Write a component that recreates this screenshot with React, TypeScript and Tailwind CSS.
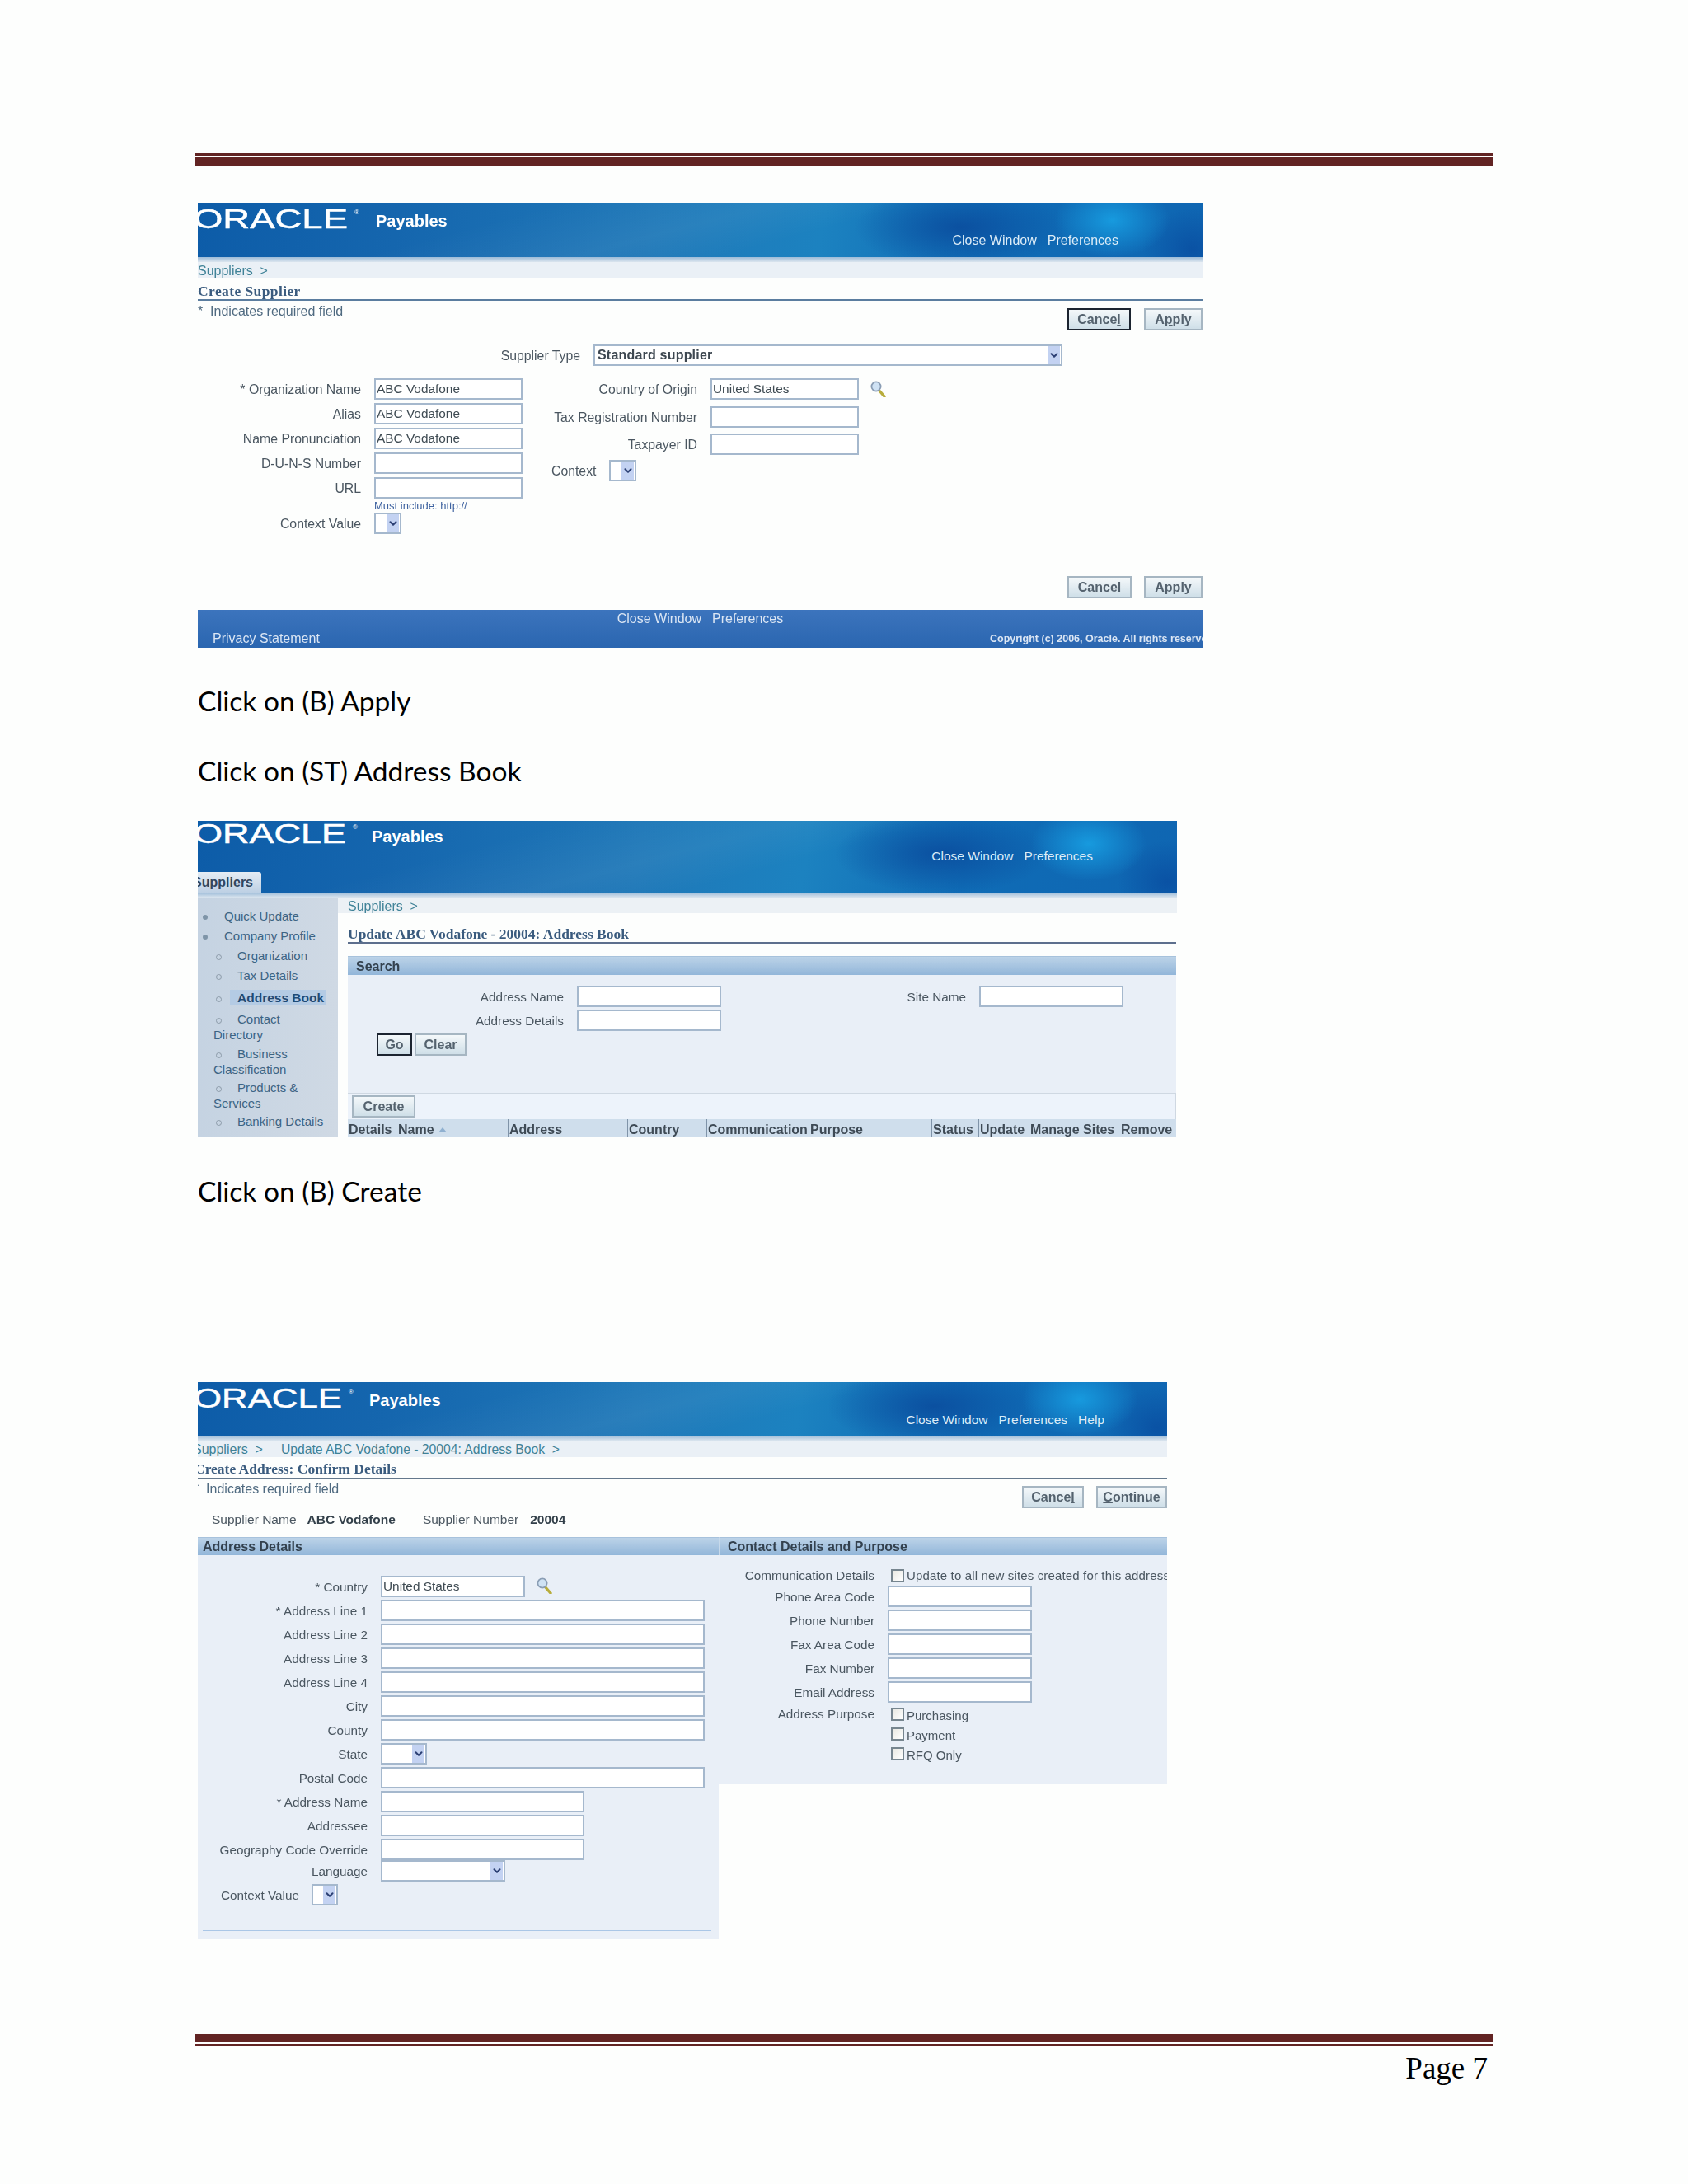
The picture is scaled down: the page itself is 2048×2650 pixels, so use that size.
import React from "react";
import { ChevronDown } from "lucide-react";

const headerBg =
  "bg-[radial-gradient(ellipse_70px_45px_at_91%_32%,#179ade_0%,rgba(23,154,222,0)_100%),radial-gradient(ellipse_130px_50px_at_76%_45%,#0b50a0_0%,rgba(11,80,160,0)_100%),radial-gradient(ellipse_60px_50px_at_99%_85%,#0a52a4_0%,rgba(10,82,164,0)_100%),linear-gradient(165deg,rgba(255,255,255,0)_30%,rgba(255,255,255,0.05)_48%,rgba(255,255,255,0)_60%),linear-gradient(100deg,#0d5ca8_0%,#1566ae_20%,#1f78b8_45%,#1c82c0_62%,#0f6cb6_78%,#0f66b2_100%)]";

function Logo({ w }: { w: number }) {
  return (
    <svg width={w} height={30} className="block shrink-0">
      <text x={-5} y={27} fontSize={33} textLength={w - 12} lengthAdjust="spacingAndGlyphs" fill="#ffffff" stroke="#ffffff" strokeWidth={0.5} fontFamily="Liberation Sans, sans-serif">ORACLE</text>
      <text x={w - 9} y={10} fontSize={8} fill="#ffffff" fontFamily="Liberation Sans, sans-serif">®</text>
    </svg>
  );
}

function Header({ h, logo, logoTop, gap, payTop, linksBottom, linksRight, linkSize, links, tab }: { h: string; logo: number; logoTop: string; gap: string; payTop: string; linksBottom: string; linksRight: string; linkSize: string; links: string[]; tab?: boolean }) {
  return (
    <div className={`flex justify-between relative ${h} ${headerBg}`}>
      <div className="flex flex-col justify-between">
        <div className={`flex ${logoTop}`}>
          <Logo w={logo} />
          <span className={`${gap} ${payTop} text-[20px] font-bold text-white leading-[20px]`}>Payables</span>
        </div>
        {tab && (
          <div className="w-[77px] h-[25px] bg-gradient-to-b from-[#e6edf4] to-[#bdd0e4] rounded-tr-[3px] overflow-hidden flex justify-end items-center pr-[10px] text-[16px] font-bold text-[#31465e] whitespace-nowrap">
            Suppliers
          </div>
        )}
      </div>
      <div className={`self-end flex gap-[13px] ${linkSize} text-[#dcecf7] leading-[20px] ${linksBottom} ${linksRight}`}>
        {links.map((l) => (
          <span key={l}>{l}</span>
        ))}
      </div>
    </div>
  );
}

function Band() {
  return <div className="h-[6px] shrink-0 bg-gradient-to-b from-[#9cbbd8] to-[#dbe5ee]" />;
}

function Input({ w, value }: { w: string; value?: string }) {
  return <div className={`${w} h-[26px] shrink-0 border-2 border-[#a5b8cd] bg-white text-[15.4px] text-[#3e4a52] leading-[22px] px-[1px] whitespace-nowrap`}>{value}</div>;
}

function Select({ w, value }: { w: string; value?: string }) {
  return (
    <div className={`${w} h-[26px] shrink-0 border-2 border-[#a5b8cd] bg-white flex justify-between items-stretch`}>
      <span className="pl-[3px] text-[16px] tracking-[0.2px] font-bold text-[#3d4750] leading-[22px]">{value}</span>
      <span className="w-[15px] bg-[#c3d2f2] flex items-center justify-center mr-[1px]">
        <ChevronDown size={14} strokeWidth={3.5} className="text-[#2c4074]" />
      </span>
    </div>
  );
}

function Btn({ w, dark, children }: { w: string; dark?: boolean; children: React.ReactNode }) {
  return (
    <div className={`${w} h-[27px] shrink-0 flex items-center justify-center border-2 ${dark ? "border-[#1c2430]" : "border-[#a6b6c2]"} bg-gradient-to-b from-[#f4f8fa] to-[#cfdfe8] text-[16px] font-bold text-[#54626e] leading-none`}>
      {children}
    </div>
  );
}

function Loupe() {
  return (
    <svg width="20" height="20" viewBox="0 0 20 20" className="shrink-0">
      <line x1="10" y1="11" x2="17" y2="19" stroke="#b8ad3c" strokeWidth="3.4" strokeLinecap="round" />
      <circle cx="7" cy="7" r="5.6" fill="#cfe2f4" stroke="#8a9db4" strokeWidth="1.8" />
    </svg>
  );
}

function Check({ label, wide }: { label: string; wide?: boolean }) {
  return (
    <div className="flex items-center h-[16px]">
      <span className="size-[16px] shrink-0 border-2 border-[#76858f] bg-gradient-to-br from-[#e8e8e2] to-white" />
      <span className={`ml-[3px] text-[15px] leading-[20px] text-[#4a5660] whitespace-nowrap ${wide ? "tracking-[0.15px]" : "mt-[3px]"}`}>{label}</span>
    </div>
  );
}

const label = "shrink-0 h-[26px] leading-[28px] text-[#4a5660] text-right whitespace-nowrap";
const leftLabel = "shrink-0 h-[26px] leading-[28px] text-[#4a5660] text-left whitespace-nowrap";
const crumb = "text-[16px] text-[#3f8297] leading-[22px]";
const title = "font-['Liberation_Serif',serif] font-bold text-[17.5px] text-[#3a5b7e] leading-[20px]";
const note = "text-[16px] text-[#4f6a80] leading-[20px] whitespace-nowrap";
const section = "bg-gradient-to-b from-[#bcd3e8] to-[#92b6d9] border-t border-[#a7c2dc] text-[16px] font-bold text-[#33414e]";
const click = "font-['Lato',sans-serif] text-[33.5px] leading-[44px] text-black ml-[240px] whitespace-nowrap";

function Rule({ flip }: { flip?: boolean }) {
  return (
    <div className="ml-[236px] w-[1576px]">
      {flip ? (
        <>
          <div className="h-[10px] bg-[#622423]" />
          <div className="h-[3px] mt-[2px] bg-[#622423]" />
        </>
      ) : (
        <>
          <div className="h-[3px] bg-[#622423]" />
          <div className="h-[11px] mt-[2px] bg-[#622423]" />
        </>
      )}
    </div>
  );
}

function Row({ name, w, children }: { name: string; w: string; children: React.ReactNode }) {
  return (
    <div className="flex items-start gap-[16px]">
      <div className={`${w} ${label}`}>{name}</div>
      {children}
    </div>
  );
}

function ScreenOne() {
  return (
    <div className="ml-[240px] mt-[44px] w-[1219px] h-[540px] overflow-hidden flex flex-col blur-[0.4px] text-[15.8px]">
      <Header h="h-[66px] shrink-0" logo={199} logoTop="pt-[4px]" gap="ml-[17px]" payTop="mt-[8px]" linksBottom="pb-[10px]" linksRight="pr-[102px]" linkSize="text-[16px]" links={["Close Window", "Preferences"]} />
      <Band />
      <div className={`h-[19px] shrink-0 bg-[#eaf0f6] ${crumb}`}>Suppliers&nbsp;&nbsp;&gt;</div>
      <div className="h-[28px] shrink-0 border-b-2 border-[#5b7d9f] flex items-end">
        <span className={`${title} tracking-[0.4px]`}>Create Supplier</span>
      </div>
      <div className="flex justify-between h-[36px] shrink-0">
        <span className={`${note} mt-[3px]`}>*&nbsp;&nbsp;Indicates required field</span>
        <div className="flex gap-[16px] mt-[9px]">
          <Btn w="w-[77px]" dark>Cance<u>l</u></Btn>
          <Btn w="w-[71px]">A<u>p</u>ply</Btn>
        </div>
      </div>
      <div className="mt-[17px] shrink-0">
        <Row name="Supplier Type" w="w-[464px]">
          <Select w="w-[569px]" value="Standard supplier" />
        </Row>
      </div>
      <div className="flex mt-[15px] shrink-0">
        <div className="flex flex-col">
          <div className="flex flex-col gap-[4px]">
            <Row name="* Organization Name" w="w-[198px]"><Input w="w-[180px]" value="ABC Vodafone" /></Row>
            <Row name="Alias" w="w-[198px]"><Input w="w-[180px]" value="ABC Vodafone" /></Row>
            <Row name="Name Pronunciation" w="w-[198px]"><Input w="w-[180px]" value="ABC Vodafone" /></Row>
            <Row name="D-U-N-S Number" w="w-[198px]"><Input w="w-[180px]" /></Row>
            <Row name="URL" w="w-[198px]"><Input w="w-[180px]" /></Row>
          </div>
          <div className="ml-[214px] h-[17px] text-[13px] leading-[17px] text-[#3f63a0]">Must include: http://</div>
          <Row name="Context Value" w="w-[198px]"><Select w="w-[33px]" /></Row>
        </div>
        <div className="ml-[16px] flex flex-col gap-[7.5px]">
          <div className="flex items-start gap-[16px]">
            <div className={`w-[196px] ${label}`}>Country of Origin</div>
            <Input w="w-[180px]" value="United States" />
            <div className="-ml-[2px] mt-[3px]"><Loupe /></div>
          </div>
          <Row name="Tax Registration Number" w="w-[196px]"><Input w="w-[180px]" /></Row>
          <Row name="Taxpayer ID" w="w-[196px]"><Input w="w-[180px]" /></Row>
          <div className="flex ml-[19px] -mt-[2px]">
            <div className={`w-[70px] ${leftLabel}`}>Context</div>
            <Select w="w-[33px]" />
          </div>
        </div>
      </div>
      <div className="flex justify-end gap-[15px] mt-[51px] h-[28px] shrink-0">
        <Btn w="w-[78px]">Cance<u>l</u></Btn>
        <Btn w="w-[71px]">A<u>p</u>ply</Btn>
      </div>
      <div className="mt-[13px] h-[46px] shrink-0 bg-gradient-to-b from-[#3c74bd] to-[#2a66b0] flex flex-col justify-between text-[#dbe6f4]">
        <div className="flex justify-center gap-[13px] text-[16px] leading-[20px] pt-[1px]">
          <span>Close Window</span>
          <span>Preferences</span>
        </div>
        <div className="flex justify-between items-center pl-[18px] pb-[1px] text-[16px] leading-[20px]">
          <span>Privacy Statement</span>
          <span className="w-[258px] overflow-hidden whitespace-nowrap text-[12.5px] font-bold">Copyright (c) 2006, Oracle. All rights reserved.</span>
        </div>
      </div>
    </div>
  );
}

const sideItem = "text-[15px] leading-[18.5px] text-[#3c6484]";

function Dot() {
  return (
    <span className="inline-block w-[32px]">
      <span className="inline-block size-[6px] rounded-full bg-[#7f95a8] align-middle ml-[6px]" />
    </span>
  );
}

function Ring() {
  return (
    <span className="inline-block w-[29px]">
      <span className="inline-block size-[7px] rounded-full border border-[#8b9aa8] align-middle ml-[3px]" />
    </span>
  );
}

function Sidebar() {
  return (
    <div className="w-[170px] h-[291px] shrink-0 overflow-hidden bg-gradient-to-r from-[#c5d3e2] to-[#cfd9e4] pt-[14px] flex flex-col">
      <div className={`${sideItem} h-[24px] shrink-0`}><Dot />Quick Update</div>
      <div className={`${sideItem} h-[24px] shrink-0`}><Dot />Company Profile</div>
      <div className={`${sideItem} h-[24px] shrink-0 pl-[19px]`}><Ring />Organization</div>
      <div className={`${sideItem} h-[24px] shrink-0 pl-[19px]`}><Ring />Tax Details</div>
      <div className="flex h-[29px] shrink-0 pl-[19px] items-start pt-[2px]">
        <Ring />
        <span className="-ml-[9px] w-[117px] h-[19px] bg-[#b4cbe4] pl-[9px] text-[15.5px] font-bold leading-[19px] text-[#1f4a75] whitespace-nowrap">Address Book</span>
      </div>
      <div className={`${sideItem} h-[42px] shrink-0 pl-[19px]`}><Ring />Contact<br />Directory</div>
      <div className={`${sideItem} h-[41px] shrink-0 pl-[19px]`}><Ring />Business<br />Classification</div>
      <div className={`${sideItem} h-[41px] shrink-0 pl-[19px]`}><Ring />Products &amp;<br />Services</div>
      <div className={`${sideItem} h-[24px] shrink-0 pl-[19px] whitespace-nowrap`}><Ring />Banking Details</div>
    </div>
  );
}

function ScreenTwo() {
  const cols: [string, string][] = [
    ["w-[60px]", "Details"],
    ["w-[134px]", "Name"],
    ["w-[145px]", "Address"],
    ["w-[96px]", "Country"],
    ["w-[125px]", "Communication"],
    ["w-[148px]", "Purpose"],
    ["w-[57px]", "Status"],
    ["w-[62px]", "Update"],
    ["w-[110px]", "Manage Sites"],
    ["w-[68px]", "Remove"],
  ];
  return (
    <div className="ml-[240px] mt-[39px] w-[1188px] h-[384px] overflow-hidden flex flex-col blur-[0.4px] text-[15.3px]">
      <Header h="h-[87px] shrink-0" tab logo={197} logoTop="pt-[0px]" gap="ml-[14px]" payTop="mt-[9px]" linksBottom="pb-[34px]" linksRight="pr-[102px]" linkSize="text-[15.5px]" links={["Close Window", "Preferences"]} />
      <Band />
      <div className="flex flex-1 min-h-0">
        <Sidebar />
        <div className="flex-1 flex flex-col min-w-0">
          <div className={`h-[19px] shrink-0 bg-[#ecf1f5] pl-[12px] ${crumb}`}>Suppliers&nbsp;&nbsp;&gt;</div>
          <div className="ml-[12px] mr-[1px] h-[37px] shrink-0 flex flex-col justify-end border-b-2 border-[#5d6f8d]">
            <span className={title}>Update ABC Vodafone - 20004: Address Book</span>
          </div>
          <div className={`ml-[12px] mr-[1px] mt-[15px] h-[23px] shrink-0 pl-[10px] leading-[24px] ${section}`}>Search</div>
          <div className="ml-[12px] mr-[1px] h-[143px] shrink-0 bg-[#e9eff7] pt-[13px]">
            <div className="flex">
              <div className="flex flex-col gap-[3px]">
                <Row name="Address Name" w="w-[262px]"><Input w="w-[175px]" /></Row>
                <Row name="Address Details" w="w-[262px]"><Input w="w-[175px]" /></Row>
              </div>
              <div className="ml-[9px]">
                <Row name="Site Name" w="w-[288px]"><Input w="w-[175px]" /></Row>
              </div>
            </div>
            <div className="flex gap-[3px] ml-[35px] mt-[3px]">
              <Btn w="w-[43px]" dark>Go</Btn>
              <Btn w="w-[63px]">Clear</Btn>
            </div>
          </div>
          <div className="ml-[12px] mr-[1px] h-[32px] shrink-0 bg-[#edf3fb] border-t border-r border-[#cfd8e2] pt-[2px] pl-[5px]">
            <Btn w="w-[77px]">Create</Btn>
          </div>
          <div className="ml-[12px] mr-[1px] h-[22px] shrink-0 bg-[#cfdeec] flex text-[16px] font-bold text-[#3e4a55] leading-[20px] whitespace-nowrap">
            {cols.map(([w, t], i) => (
              <div key={t} className={`${w} shrink-0 pl-[1px] pt-[3px] flex items-start gap-[5px] ${i === 2 || i === 3 || i === 4 || i === 6 || i === 7 ? "border-l border-[#7f93a8]" : ""}`}>
                {t}
                {t === "Name" && <span className="size-0 mt-[7px] border-x-[5px] border-x-transparent border-b-[6px] border-b-[#8fb0d0]" />}
              </div>
            ))}
          </div>
        </div>
      </div>
    </div>
  );
}

function ScreenThree() {
  const lw = "w-[206px]";
  return (
    <div className="ml-[240px] mt-[210px] w-[1176px] h-[676px] overflow-hidden flex flex-col blur-[0.4px] text-[15.3px]">
      <Header h="h-[65px] shrink-0" logo={192} logoTop="pt-[4px]" gap="ml-[16px]" payTop="mt-[8px]" linksBottom="pb-[9px]" linksRight="pr-[76px]" linkSize="text-[15.5px]" links={["Close Window", "Preferences", "Help"]} />
      <Band />
      <div className={`h-[20px] shrink-0 bg-[#eaf0f6] overflow-hidden whitespace-nowrap ${crumb} -indent-[6px]`}>
        Suppliers&nbsp;&nbsp;&gt;<span className="ml-[22px] text-[15.7px]">Update ABC Vodafone - 20004: Address Book&nbsp;&nbsp;&gt;</span>
      </div>
      <div className="h-[27px] shrink-0 border-b-2 border-[#64788c] flex items-end pb-[1px] overflow-hidden">
        <span className={`${title} -ml-[4px]`}>Create Address: Confirm Details</span>
      </div>
      <div className="flex justify-between h-[36px] shrink-0">
        <span className={`${note} mt-[2px] -ml-[5px]`}>*&nbsp;&nbsp;Indicates required field</span>
        <div className="flex gap-[15px] mt-[8px]">
          <Btn w="w-[75px]">Cance<u>l</u></Btn>
          <Btn w="w-[86px]"><u>C</u>ontinue</Btn>
        </div>
      </div>
      <div className="flex ml-[17px] h-[34px] shrink-0 items-start text-[15.5px] leading-[26px] text-[#4a5660]">
        <span>Supplier Name</span>
        <span className="ml-[13px] font-bold text-[#33404a]">ABC Vodafone</span>
        <span className="ml-[33px]">Supplier Number</span>
        <span className="ml-[14px] font-bold text-[#33404a]">20004</span>
      </div>
      <div className="flex flex-1 min-h-0 items-start">
        <div className="w-[632px] shrink-0 h-[488px] flex flex-col bg-[#e9eff7]">
          <div className={`h-[22px] shrink-0 pl-[6px] leading-[22px] ${section}`}>Address Details</div>
          <div className="flex flex-col gap-[3px] mt-[25px]">
            <div className="flex items-start gap-[16px]">
              <div className={`${lw} ${label}`}>* Country</div>
              <Input w="w-[175px]" value="United States" />
              <div className="-ml-[2px] mt-[2px]"><Loupe /></div>
            </div>
            <Row name="* Address Line 1" w={lw}><Input w="w-[393px]" /></Row>
            <Row name="Address Line 2" w={lw}><Input w="w-[393px]" /></Row>
            <Row name="Address Line 3" w={lw}><Input w="w-[393px]" /></Row>
            <Row name="Address Line 4" w={lw}><Input w="w-[393px]" /></Row>
            <Row name="City" w={lw}><Input w="w-[393px]" /></Row>
            <Row name="County" w={lw}><Input w="w-[393px]" /></Row>
            <Row name="State" w={lw}><Select w="w-[56px]" /></Row>
            <Row name="Postal Code" w={lw}><Input w="w-[393px]" /></Row>
            <Row name="* Address Name" w={lw}><Input w="w-[247px]" /></Row>
            <Row name="Addressee" w={lw}><Input w="w-[247px]" /></Row>
            <Row name="Geography Code Override" w={lw}><Input w="w-[247px]" /></Row>
          </div>
          <div className="flex flex-col gap-[3px]">
            <Row name="Language" w={lw}><Select w="w-[151px]" /></Row>
            <div className="flex ml-[28px]">
              <div className={`w-[110px] ${leftLabel}`}>Context Value</div>
              <Select w="w-[32px]" />
            </div>
          </div>
          <div className="mt-[30px] ml-[6px] w-[617px] h-px bg-[#a9c6e6]" />
        </div>
        <div className="flex-1 min-w-0 h-[300px] overflow-hidden flex flex-col bg-[#e9eff7]">
          <div className={`h-[22px] shrink-0 pl-[9px] leading-[22px] border-l-2 border-l-[#c7d9ea] ${section}`}>Contact Details and Purpose</div>
          <div className="flex items-center gap-[20px] mt-[17px] h-[16px] shrink-0">
            <div className="w-[189px] shrink-0 text-[#4a5660] text-right whitespace-nowrap">Communication Details</div>
            <Check wide label="Update to all new sites created for this address" />
          </div>
          <div className="flex flex-col gap-[3px] mt-[4px]">
            <Row name="Phone Area Code" w="w-[189px]"><Input w="w-[175px]" /></Row>
            <Row name="Phone Number" w="w-[189px]"><Input w="w-[175px]" /></Row>
            <Row name="Fax Area Code" w="w-[189px]"><Input w="w-[175px]" /></Row>
            <Row name="Fax Number" w="w-[189px]"><Input w="w-[175px]" /></Row>
            <Row name="Email Address" w="w-[189px]"><Input w="w-[175px]" /></Row>
          </div>
          <div className="flex gap-[20px] mt-[6px]">
            <div className="w-[189px] shrink-0 leading-[16px] text-[#4a5660] text-right whitespace-nowrap">Address Purpose</div>
            <div className="flex flex-col gap-[8px]">
              <Check label="Purchasing" />
              <Check label="Payment" />
              <Check label="RFQ Only" />
            </div>
          </div>
        </div>
      </div>
    </div>
  );
}

export default function App() {
  return (
    <div className="w-[2048px] h-[2650px] bg-[#fdfefd] overflow-hidden pt-[186px] font-['Liberation_Sans',sans-serif]">
      <Rule />
      <ScreenOne />
      <div className={`${click} mt-[42px]`}>Click on (B) Apply</div>
      <div className={`${click} mt-[41px]`}>Click on (ST) Address Book</div>
      <ScreenTwo />
      <div className={`${click} mt-[43px]`}>Click on (B) Create</div>
      <ScreenThree />
      <div className="mt-[115px]">
        <Rule flip />
      </div>
      <div className="ml-[236px] w-[1569px] mt-[5px] text-right font-['Liberation_Serif',serif] text-[37px] leading-[44px] text-black">Page 7</div>
    </div>
  );
}
